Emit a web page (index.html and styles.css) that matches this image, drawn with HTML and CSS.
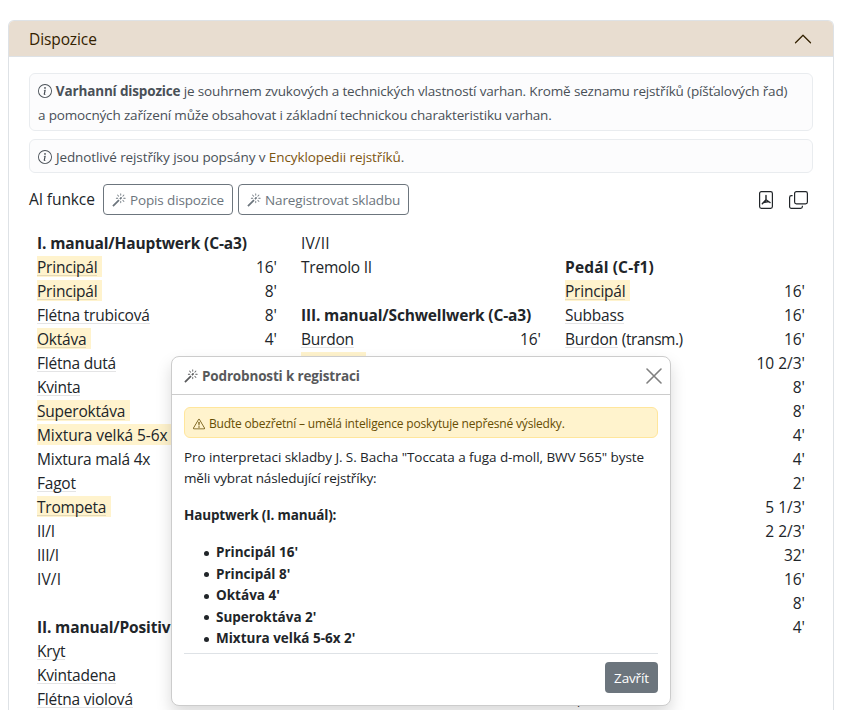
FILE: index.html
```html
<!DOCTYPE html>
<html lang="cs">
<head>
<meta charset="utf-8">
<title>Dispozice</title>
<link rel="stylesheet" href="styles.css">
</head>
<body>
<svg class="defs" aria-hidden="true">
<symbol id="info" viewBox="0 0 16 16"><path d="M8 15A7 7 0 1 1 8 1a7 7 0 0 1 0 14m0 1A8 8 0 1 0 8 0a8 8 0 0 0 0 16"/><path d="m8.930 6.588-2.290.287-.082.380.450.083c.294.070.352.176.288.469l-.738 3.468c-.194.897.105 1.319.808 1.319.545 0 1.178-.252 1.465-.598l.088-.416c-.2.176-.492.246-.686.246-.275 0-.375-.193-.304-.533zM9 4.500a1 1 0 1 1-2 0 1 1 0 0 1 2 0"/></symbol>
<symbol id="magic" viewBox="0 0 16 16"><path d="M9.500 2.672a.5.5 0 1 0 1 0V.843a.5.5 0 0 0-1 0zm4.500.035A.5.5 0 0 0 13.293 2L12 3.293a.5.5 0 1 0 .707.707zM7.293 4A.5.5 0 1 0 8 3.293L6.707 2A.5.5 0 0 0 6 2.707zm-.621 2.500a.5.5 0 1 0 0-1H4.843a.5.5 0 1 0 0 1zm8.485 0a.5.5 0 1 0 0-1h-1.829a.5.5 0 0 0 0 1zM13.293 10A.5.5 0 1 0 14 9.293L12.707 8a.5.5 0 1 0-.707.707zM9.500 11.157a.5.5 0 0 0 1 0V9.328a.5.5 0 0 0-1 0zm1.854-5.097a.5.5 0 0 0 0-.706l-.708-.708a.5.5 0 0 0-.707 0L8.646 5.940a.5.5 0 0 0 0 .707l.708.708a.5.5 0 0 0 .707 0l1.293-1.293Zm-3 3a.5.5 0 0 0 0-.706l-.708-.708a.5.5 0 0 0-.707 0L.646 13.940a.5.5 0 0 0 0 .707l.707.707a.5.5 0 0 0 .707 0z"/></symbol>
<symbol id="warn" viewBox="0 0 16 16"><path d="M7.938 2.016A.13.13 0 0 1 8.002 2a.13.13 0 0 1 .063.016.15.15 0 0 1 .054.057l6.857 11.667c.036.060.035.124.002.183a.2.2 0 0 1-.054.060.1.1 0 0 1-.066.017H1.146a.1.1 0 0 1-.066-.017.2.2 0 0 1-.054-.060.18.18 0 0 1 .002-.183L7.884 2.073a.15.15 0 0 1 .054-.057m1.044-.450a1.130 1.130 0 0 0-1.960 0L.165 13.233c-.457.778.091 1.767.980 1.767h13.713c.889 0 1.438-.990.980-1.767z"/><path d="M7.002 12a1 1 0 1 1 2 0 1 1 0 0 1-2 0M7.100 5.995a.905.905 0 1 1 1.800 0l-.350 3.507a.552.552 0 0 1-1.100 0z"/></symbol>
</svg>
<section class="card">
  <header class="card-header">
    <span>Dispozice</span>
    <svg class="chevron" viewBox="0 0 16 16"><path d="m2 11 6-6 6 6"/></svg>
  </header>
  <div class="card-body">
    <div class="note"><p><svg class="icon"><use href="#info"/></svg> <b>Varhanní dispozice</b> je souhrnem zvukových a technických vlastností varhan. Kromě seznamu rejstříků (píšťalových řad)</p><p>a pomocných zařízení může obsahovat i základní technickou charakteristiku varhan.</p></div>
    <div class="note short"><p><svg class="icon"><use href="#info"/></svg> Jednotlivé rejstříky jsou popsány v <a href="#">Encyklopedii rejstříků</a>.</p></div>
    <div class="tools">
      <span class="label">AI funkce</span>
      <button class="btn describe"><svg class="icon"><use href="#magic"/></svg><span>Popis dispozice</span></button>
      <button class="btn register"><svg class="icon"><use href="#magic"/></svg><span>Naregistrovat skladbu</span></button>
      <div class="actions">
        <svg class="action" viewBox="0 0 18 18"><rect x="2.600" y=".6" width="12.800" height="16.800" rx="1.800"/><path d="M9 4.500v4.200L5.300 12.700M9 8.700l4 2.800M6.500 11.500l5-1" class="bold"/></svg>
        <svg class="action wide" viewBox="0 0 19 18"><rect x="5.600" y=".6" width="12.800" height="12.300" rx="1.800"/><path d="M3.600 4.600H2.400A1.800 1.800 0 0 0 .6 6.400v9.200a1.800 1.800 0 0 0 1.800 1.800h9.200a1.800 1.800 0 0 0 1.800-1.800v-.9"/></svg>
      </div>
    </div>
    <div class="stops">
      <ul>
        <li><b>I. manual/Hauptwerk (C-a3)</b></li>
        <li><mark><a>Principál</a></mark><i>16'</i></li>
        <li><mark><a>Principál</a></mark><i>8'</i></li>
        <li><a>Flétna trubicová</a><i>8'</i></li>
        <li><mark><a>Oktáva</a></mark><i>4'</i></li>
        <li><a>Flétna dutá</a></li>
        <li><a>Kvinta</a></li>
        <li><mark><a>Superoktáva</a></mark></li>
        <li><mark><span>Mixtura velká 5-6x</span></mark></li>
        <li><span>Mixtura malá 4x</span></li>
        <li><a>Fagot</a></li>
        <li><mark><a>Trompeta</a></mark></li>
        <li>II/I</li>
        <li>III/I</li>
        <li class="wider">IV/I</li>
        <li></li>
        <li><b>II. manual/Positiv</b></li>
        <li><a>Kryt</a></li>
        <li><a>Kvintadena</a></li>
        <li><a>Flétna violová</a></li>
      </ul>
      <ul>
        <li class="wider">IV/II</li>
        <li>Tremolo II</li>
        <li></li>
        <li><b>III. manual/Schwellwerk (C-a3)</b></li>
        <li><a>Burdon</a><i>16'</i></li>
        <li><mark class="covered"></mark></li>
      </ul>
      <ul>
        <li></li>
        <li><b class="pedal">Pedál (C-f1)</b></li>
        <li><mark><a>Principál</a></mark><i>16'</i></li>
        <li><a>Subbass</a><i>16'</i></li>
        <li><a>Burdon</a><span class="suffix">(transm.)</span><i>16'</i></li>
        <li><i>10 2/3'</i></li>
        <li><i>8'</i></li>
        <li><i>8'</i></li>
        <li><i>4'</i></li>
        <li><i>4'</i></li>
        <li><i>2'</i></li>
        <li><i>5 1/3'</i></li>
        <li><i>2 2/3'</i></li>
        <li><i>32'</i></li>
        <li><i>16'</i></li>
        <li><i>8'</i></li>
        <li><i>4'</i></li>
        <li></li>
        <li></li>
        <li>III,</li>
      </ul>
    </div>
  </div>
</section>
<div class="popover" role="dialog">
  <header class="popover-header">
    <svg class="icon"><use href="#magic"/></svg><b>Podrobnosti k registraci</b>
    <svg class="close" viewBox="0 0 16 16"><path d="m1 1 14 14M15 1 1 15"/></svg>
  </header>
  <div class="popover-body">
    <div class="warning"><svg class="icon"><use href="#warn"/></svg><span>Buďte obezřetní – umělá inteligence poskytuje nepřesné výsledky.</span></div>
    <div class="answer">
      <p><span class="lead">Pro interpretaci skladby J. S. Bacha "Toccata a fuga d-moll, BWV 565" byste</span><br>měli vybrat následující rejstříky:</p>
      <p><b>Hauptwerk (I. manuál):</b></p>
      <ul>
        <li>Principál 16'</li>
        <li>Principál 8'</li>
        <li>Oktáva 4'</li>
        <li>Superoktáva 2'</li>
        <li>Mixtura velká 5-6x 2'</li>
      </ul>
    </div>
    <footer><button class="btn-close">Zavřít</button></footer>
  </div>
</div>
</body>
</html>
```
FILE: styles.css
```css
* { box-sizing: border-box; }
body {
  margin: 0;
  padding: 20px 9px 0 8px;
  height: 710px;
  overflow: hidden;
  background: #fff;
  color: #212529;
  font: 15.500px/24px "Open Sans", "Noto Sans", sans-serif;
}
p, ul { margin: 0; padding: 0; }
ul { list-style: none; }
b { font-weight: 700; }
i { font-style: normal; }
button { font-family: inherit; letter-spacing: inherit; }
.defs { position: absolute; width: 0; height: 0; }
.icon { width: 14px; height: 14px; fill: currentColor; flex: none; }

.card { height: 690px; border: 1px solid #dee2e6; border-bottom: 0; border-radius: 6px 6px 0 0; overflow: hidden; }
.card-header {
  display: flex; align-items: center; justify-content: space-between;
  height: 36px; padding: 0 20px;
  background: #e8ddd0; color: #332100;
  border-bottom: 1px solid #dee2e6;
  letter-spacing: -.1px;
}
.chevron { width: 20px; height: 20px; fill: none; stroke: #332100; stroke-width: 1; stroke-linecap: round; stroke-linejoin: round; }
.card-body { padding: 16px 20px; }

.note {
  padding: 5px 8px 3px; margin-bottom: 8px;
  border: 1px solid #e9ecef; border-radius: 6px;
  background: #fcfcfd; color: #495057;
  font-size: 13.500px; letter-spacing: -.155px;
  white-space: nowrap;
}
.note.short { letter-spacing: -.1px; }
.note .icon { vertical-align: -2px; margin-right: .5px; }
.note a { color: #7c5510; text-decoration: none; }

.tools { display: flex; align-items: center; height: 32px; margin-top: 10px; }
.label { width: 74px; letter-spacing: -.1px; }
.btn {
  display: flex; align-items: center; gap: 4px;
  height: 31px; padding: 1px 8px 0; margin-right: 5px;
  border: 1px solid #6c757d; border-radius: 4px;
  background: #fff; color: #6c757d;
  font-size: 13.500px; letter-spacing: -.14px; white-space: nowrap;
}
.describe { width: 130px; }
.register { width: 171px; }
.actions { display: flex; gap: 14px; margin-left: auto; margin-right: 5px; padding-top: 2px; }
.action { width: 18px; height: 18px; fill: none; stroke: #212529; stroke-width: 1.200; }
.action.wide { width: 19px; }
.action .bold { stroke-width: 1.400; stroke-linecap: round; }

.stops { display: grid; grid-template-columns: repeat(3, 240px); gap: 24px; padding: 0 8px; margin-top: 16px; white-space: nowrap; letter-spacing: -.22px; }
.stops li { display: flex; align-items: flex-start; height: 24px; }
.stops .wider { letter-spacing: .15px; }
.stops b { letter-spacing: -.15px; }
.stops .pedal { letter-spacing: .15px; }
.stops i { margin-left: auto; letter-spacing: 0; }
.stops a { height: 21px; border-bottom: 1px solid rgba(33, 37, 41, .12); }
.stops .suffix { margin-left: 4px; letter-spacing: -.45px; }
.stops mark span { letter-spacing: -.08px; }
mark { display: flex; height: 21px; margin-top: 1px; padding-right: 4.500px; background: #fff3cd; color: inherit; }
mark > * { margin-top: -1px; }
.covered { width: 65px; }

.popover {
  position: absolute; left: 171px; top: 356px; width: 500px; height: 350px;
  border: 1px solid #ccc; border-radius: 8px;
  background: #fff;
  box-shadow: 0 8px 16px rgba(0, 0, 0, .15);
}
.popover-header {
  display: flex; align-items: center; gap: 4px;
  height: 38px; padding: 0 8px 0 12px;
  border-bottom: 1px solid #ccc;
  color: #58595b; font-size: 13.500px; letter-spacing: -.16px;
}
.close { width: 16px; height: 16px; margin-left: auto; fill: none; stroke: #808080; stroke-width: 1.600; stroke-linecap: round; }
.popover-body { padding: 12px; font-size: 13.500px; line-height: 21px; letter-spacing: -.15px; }
.warning {
  display: flex; align-items: center; gap: 4px;
  height: 31px; padding: 2px 8px 0; margin-bottom: 9px;
  border: 1px solid #ffe69c; border-radius: 6px;
  background: #fff3cd; color: #664d03;
  font-size: 12px; letter-spacing: -.18px;
}
.warning .icon { width: 12px; height: 12px; }
.answer { height: 206px; overflow: hidden; white-space: nowrap; }
.answer p { margin-bottom: 16px; }
.answer .lead { letter-spacing: -.07px; }
.answer ul { padding-left: 32px; font-weight: 700; line-height: 21.500px; letter-spacing: 0; }
.answer li { display: flex; align-items: center; }
.answer li::before { content: ""; width: 5px; height: 5px; margin: 1px 7px 0 -12px; border-radius: 50%; background: currentColor; }
footer { display: flex; justify-content: flex-end; padding-top: 8px; border-top: 1px solid #dee2e6; }
.btn-close {
  width: 53px; height: 31px; padding: 0;
  border: 0; border-radius: 4px;
  background: #6c757d; color: #fff; font-size: 13.500px;
}
```
